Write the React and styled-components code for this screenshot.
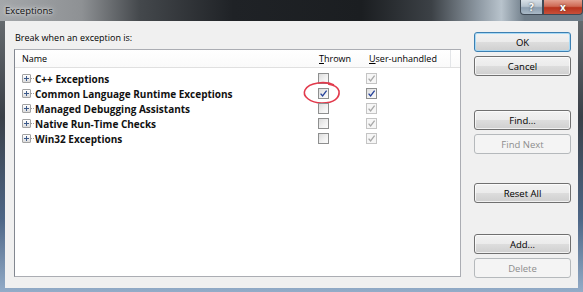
import React from "react";
import styled, { createGlobalStyle } from "styled-components";

const GlobalStyle = createGlobalStyle`
  html, body {
    margin: 0;
    padding: 0;
    width: 583px;
    height: 292px;
    overflow: hidden;
  }
  body {
    font-family: "Open Sans", "Noto Sans", sans-serif;
    font-size: 9px;
    color: #000;
  }
`;

const Window = styled.div`
  width: 583px;
  height: 292px;
  display: flex;
  flex-direction: column;
  background: linear-gradient(to bottom, #6f7376 0%, #3a4048 40%, #4d6686 75%, #93acc8 100%);
`;

const TitleBar = styled.div`
  height: 21px;
  flex: none;
  display: flex;
  align-items: flex-start;
  background: linear-gradient(
    to right,
    #a4a7aa 0%,
    #8e9194 14%,
    #44484c 24%,
    #1f2226 40%,
    #1b1e21 62%,
    #3c4146 74%,
    #8d98a2 82%,
    #b8c3cc 86%,
    #6f7d89 90%
  );
`;

const Title = styled.div`
  flex: 1;
  padding: 4px 0 0 5px;
  font-size: 9.5px;
  color: #111;
  text-shadow: 0 0 6px #e4e4e4, 0 0 3px #eee;
`;

const CaptionButton = styled.div`
  width: ${(p) => p.$w}px;
  height: 15px;
  display: flex;
  align-items: center;
  justify-content: center;
  box-sizing: border-box;
  border: 1px solid #3f4a56;
  border-top: none;
  color: #fff;
  font-size: 10px;
  font-weight: 700;
  background: ${(p) =>
    p.$close
      ? "linear-gradient(to bottom, #e3a08f 0%, #cf6a55 45%, #b8331d 55%, #c8503a 100%)"
      : "linear-gradient(to bottom, #d7dfe6 0%, #b6c3cf 45%, #8d9fb1 55%, #a9b9c7 100%)"};
  border-radius: ${(p) => (p.$close ? "0 0 4px 0" : "0 0 0 4px")};
  text-shadow: 0 0 2px #333;
`;

const Client = styled.div`
  flex: 1;
  margin: 0 5px 4px 5px;
  background: #f0f0f0;
  display: flex;
  padding: 0 7px 0 9px;
  gap: 13px;
`;

const LeftColumn = styled.div`
  width: 447px;
  display: flex;
  flex-direction: column;
  padding: 8px 0 11px 0;
`;

const Prompt = styled.div`
  height: 17px;
  line-height: 17px;
  padding-left: 1px;
  margin-bottom: 3px;
`;

const ListBox = styled.div`
  flex: 1;
  background: #fff;
  border: 1px solid #abadb3;
  border-left-color: #828790;
  display: flex;
  flex-direction: column;
`;

const HeaderRow = styled.div`
  height: 17px;
  display: flex;
  border-bottom: 1px solid #e0e0e0;
  background: linear-gradient(to bottom, #ffffff, #fafafa);
`;

const HeaderCell = styled.div`
  width: ${(p) => p.$w}px;
  flex: ${(p) => (p.$grow ? 1 : "none")};
  box-sizing: border-box;
  padding-left: ${(p) => p.$pad}px;
  line-height: 17px;
  border-right: ${(p) => (p.$sep ? "1px solid #e3e5e8" : "none")};
`;

const Accel = styled.span`
  text-decoration: underline;
`;

const Rows = styled.div`
  padding-top: 3px;
  display: flex;
  flex-direction: column;
`;

const Row = styled.div`
  height: 15px;
  display: flex;
  align-items: center;
`;

const NameCell = styled.div`
  width: 301px;
  display: flex;
  align-items: center;
  padding-left: 7px;
  box-sizing: border-box;
  font-size: 10px;
  font-weight: 700;
  color: #111;
  white-space: nowrap;
`;

const Expander = styled.div`
  width: 9px;
  height: 9px;
  box-sizing: border-box;
  border: 1px solid #a3a3a3;
  border-radius: 1px;
  background: linear-gradient(to bottom, #ffffff, #dcdcdc);
  position: relative;
  flex: none;
  &::before {
    content: "";
    position: absolute;
    left: 1px;
    top: 3px;
    width: 5px;
    height: 1px;
    background: #3c5a8a;
  }
  &::after {
    content: "";
    position: absolute;
    left: 3px;
    top: 1px;
    width: 1px;
    height: 5px;
    background: #3c5a8a;
  }
`;

const Connector = styled.div`
  width: 3px;
  border-top: 1px dotted #a0a0a0;
  margin-right: 1px;
  flex: none;
`;

const CheckCell = styled.div`
  width: ${(p) => p.$w}px;
  padding-left: ${(p) => p.$pad}px;
  box-sizing: border-box;
  display: flex;
  align-items: center;
  position: relative;
`;

const Box = styled.div`
  width: 11px;
  height: 11px;
  box-sizing: border-box;
  border: 1px solid ${(p) => (p.$disabled ? "#c4c4c4" : "#8e8f8f")};
  background: ${(p) =>
    p.$disabled
      ? "#f6f6f6"
      : "linear-gradient(135deg, #dcdcdc 0%, #f2f2f2 60%, #fbfbfb 100%)"};
  display: flex;
  align-items: center;
  justify-content: center;
`;

const Annotation = styled.svg`
  position: absolute;
  left: -13px;
  top: -6px;
  overflow: visible;
  pointer-events: none;
`;

const ButtonColumn = styled.div`
  width: 97px;
  display: flex;
  flex-direction: column;
  padding-top: 11px;
`;

const Button = styled.div`
  height: 20px;
  box-sizing: border-box;
  margin-top: ${(p) => p.$mt || 0}px;
  border: 1px solid ${(p) => (p.$disabled ? "#b5b9bc" : p.$default ? "#3c7fb1" : "#707070")};
  border-radius: 3px;
  display: flex;
  align-items: center;
  justify-content: center;
  font-size: 9.5px;
  color: ${(p) => (p.$disabled ? "#8d8d8d" : "#000")};
  background: ${(p) =>
    p.$disabled
      ? "#f4f4f4"
      : "linear-gradient(to bottom, #f2f2f2 0%, #ebebeb 50%, #dddddd 51%, #cfcfcf 100%)"};
  box-shadow: ${(p) =>
    p.$disabled
      ? "none"
      : p.$default
      ? "inset 0 0 0 1px #a7d9f5"
      : "inset 0 0 0 1px rgba(255,255,255,0.7)"};
`;

const Check = ({ color }) => (
  <svg width="9" height="9" viewBox="0 0 9 9">
    <path d="M1.6 4.6 L3.6 7 L7.6 1.6" fill="none" stroke={color} strokeWidth="1.3" />
  </svg>
);

const CheckBox = ({ checked, disabled }) => (
  <Box $disabled={disabled}>
    {checked && <Check color={disabled ? "#a8a8a8" : "#25419a"} />}
  </Box>
);

const exceptions = [
  { name: "C++ Exceptions", thrown: false, user: true, active: false },
  { name: "Common Language Runtime Exceptions", thrown: true, user: true, active: true },
  { name: "Managed Debugging Assistants", thrown: false, user: true, active: false },
  { name: "Native Run-Time Checks", thrown: false, user: true, active: false },
  { name: "Win32 Exceptions", thrown: false, user: true, active: false },
];

export default function App() {
  return (
    <>
      <GlobalStyle />
      <Window>
        <TitleBar>
          <Title>Exceptions</Title>
          <CaptionButton $w={23}>?</CaptionButton>
          <CaptionButton $w={40} $close>x</CaptionButton>
        </TitleBar>
        <Client>
          <LeftColumn>
            <Prompt>Break when an exception is:</Prompt>
            <ListBox>
              <HeaderRow>
                <HeaderCell $w={301} $pad={7}>Name</HeaderCell>
                <HeaderCell $w={47} $pad={3}>
                  <Accel>T</Accel>hrown
                </HeaderCell>
                <HeaderCell $w={88} $pad={6} $sep>
                  <Accel>U</Accel>ser-unhandled
                </HeaderCell>
                <HeaderCell $grow />
              </HeaderRow>
              <Rows>
                {exceptions.map((ex) => (
                  <Row key={ex.name}>
                    <NameCell>
                      <Expander />
                      <Connector />
                      {ex.name}
                    </NameCell>
                    <CheckCell $w={47} $pad={2}>
                      <CheckBox checked={ex.thrown} disabled={false} />
                      {ex.active && (
                        <Annotation width="38" height="23" viewBox="0 0 38 23">
                          <path
                            d="M31 3 C23 -1 6 0 2 8 C-1 14 7 21 19 21 C31 21 37 16 36 9 C35 5 31 3 25 2"
                            fill="none"
                            stroke="#e23a4c"
                            strokeWidth="1.6"
                          />
                        </Annotation>
                      )}
                    </CheckCell>
                    <CheckCell $w={88} $pad={3}>
                      <CheckBox checked={ex.user} disabled={!ex.active} />
                    </CheckCell>
                  </Row>
                ))}
              </Rows>
            </ListBox>
          </LeftColumn>
          <ButtonColumn>
            <Button $default>OK</Button>
            <Button $mt={4}>Cancel</Button>
            <Button $mt={34}>Find...</Button>
            <Button $mt={4} $disabled>Find Next</Button>
            <Button $mt={29}>Reset All</Button>
            <Button $mt={31}>Add...</Button>
            <Button $mt={4} $disabled>Delete</Button>
          </ButtonColumn>
        </Client>
      </Window>
    </>
  );
}
